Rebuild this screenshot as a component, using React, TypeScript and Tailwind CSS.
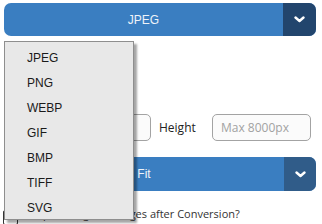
const formats = ["JPEG", "PNG", "WEBP", "GIF", "BMP", "TIFF", "SVG"];

function Chevron() {
  return (
    <svg width="11" height="7" viewBox="0 0 11 7" fill="none">
      <polyline points="1.5,1.5 5.5,5 9.5,1.5" stroke="#ffffff" strokeWidth="2.4" strokeLinecap="round" strokeLinejoin="round" />
    </svg>
  );
}

export default function App() {
  return (
    <div className="relative w-[322px] h-[224px] overflow-hidden bg-white font-['Open_Sans',sans-serif]">
      <div className="flex flex-col px-[4px] pt-[3px]">
        {/* Output format */}
        <div className="h-[33px] flex">
          <div className="flex w-[312px] rounded-[7px] overflow-hidden bg-[#3a7ec1]">
            <div className="flex-1 flex items-center justify-center text-[12px] text-[#eef3f9] font-['Liberation_Sans',Arial,sans-serif]">
              JPEG
            </div>
            <div className="w-[33px] flex items-center justify-center bg-[#22456d]">
              <Chevron />
            </div>
          </div>
        </div>

        {/* Resize heading (under the open menu) */}
        <div className="h-[78px] flex flex-col justify-end pb-[10px] text-[12px] text-[#333]">
          <span>Resize</span>
        </div>

        {/* Width / Height */}
        <div className="h-[27px] flex items-center text-[12px] text-[#222]">
          <span className="w-[42px] pl-[4px]">Width</span>
          <input
            className="w-[105px] h-[27px] rounded-[5px] border-[1.5px] border-[#a3a3a3] bg-[#fbfbfb] px-[8px] outline-none"
            placeholder=""
          />
          <span className="ml-[8px] w-[53px]">Height</span>
          <input
            className="w-[99px] h-[27px] rounded-[5px] border-[1.5px] border-[#a3a3a3] bg-[#fbfbfb] px-[8px] text-[12px] outline-none placeholder:text-[#a2a2a2]"
            placeholder="Max 8000px"
          />
        </div>

        {/* Resize mode */}
        <div className="h-[34px] flex mt-[16px]">
          <div className="flex w-[312px] rounded-[7px] overflow-hidden bg-[#3a7ec1]">
            <div className="flex-1 flex items-center justify-center text-[12px] text-[#eef3f9] font-['Liberation_Sans',Arial,sans-serif]">
              Fit
            </div>
            <div className="w-[32px] flex items-center justify-center bg-[#305c89]">
              <Chevron />
            </div>
          </div>
        </div>

        {/* Checkbox */}
        <label className="flex items-start gap-[6px] mt-[16px] -ml-[1px] text-[11px] leading-[14px] text-[#333]">
          <span className="w-[15px] h-[15px] mt-[3px] border border-[#333] rounded-[2px] bg-white shrink-0" />
          <span>Keep all Original Images after Conversion?</span>
        </label>
      </div>

      {/* Open format menu */}
      <div className="absolute left-[4px] top-[41px] w-[130px] h-[179px] bg-[#e8e8e8] border border-[#8e8e8e] shadow-[3px_3px_2px_rgba(0,0,0,0.35)] pt-[3px] font-['Liberation_Sans',Arial,sans-serif] text-[12px] text-[#1a1a1a]">
        {formats.map((f) => (
          <div key={f} className="h-[25px] flex items-center pl-[22px]">
            {f}
          </div>
        ))}
      </div>
    </div>
  );
}
